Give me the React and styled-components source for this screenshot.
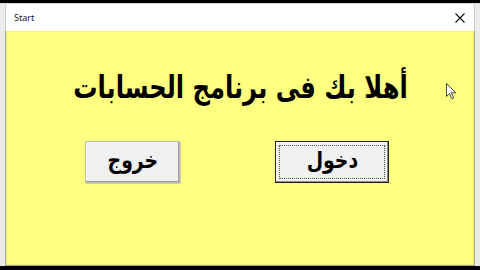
import React from 'react';
import styled, { createGlobalStyle } from 'styled-components';

const GlobalStyle = createGlobalStyle`
  html, body {
    margin: 0;
    padding: 0;
    background: #000;
    width: 480px;
    height: 270px;
    overflow: hidden;
  }
`;

const Screen = styled.div`
  width: 480px;
  height: 270px;
  padding-top: 3px;
  box-sizing: border-box;
`;

const Window = styled.div`
  position: relative;
  height: 263px;
  background: #ececec;
  border-top: 1px solid #d8d8d8;
  box-sizing: border-box;
  display: flex;
  flex-direction: column;
  padding: 0 5px 0 5px;
`;

const TitleBar = styled.div`
  height: 27px;
  background: #fff;
  display: flex;
  align-items: center;
  justify-content: space-between;
  padding: 0 9px 0 8px;
  border-left: 1px solid #c8c8c8;
  border-right: 1px solid #c8c8c8;
`;

const Title = styled.span`
  font-family: "Noto Sans", "DejaVu Sans", sans-serif;
  font-size: 9px;
  color: #111;
`;

const Close = styled.span`
  display: flex;
  width: 10px;
  height: 10px;
`;

const Client = styled.div`
  flex: 1;
  background: #ffff80;
  border: 1px solid #a8a88a;
  border-top: none;
  box-shadow: inset 0 0 2px rgba(150, 150, 90, 0.4);
  display: flex;
  flex-direction: column;
  align-items: center;
`;

const Heading = styled.h1`
  margin: 35px 0 0 0;
  font-family: "DejaVu Sans", sans-serif;
  font-weight: bold;
  font-size: 31px;
  line-height: 42px;
  color: #000;
  direction: rtl;
  white-space: nowrap;
  transform: scaleX(0.78);
`;

const ButtonRow = styled.div`
  align-self: stretch;
  display: flex;
  align-items: flex-start;
  padding-left: 79px;
  gap: 95px;
  margin-top: 33px;
`;

const Button = styled.button`
  width: ${p => p.$w}px;
  height: 42px;
  box-sizing: border-box;
  background: #f0f0f0;
  border: 1px solid ${p => (p.$focused ? '#222' : '#b9b9b9')};
  box-shadow: ${p =>
    p.$focused
      ? 'inset -1px -1px 0 #8a8a8a, inset 1px 1px 0 #fff'
      : '1px 1px 0 #d0d0b0, inset -1px -1px 0 #a0a0a0, inset 1px 1px 0 #fff'};
  display: flex;
  align-items: center;
  justify-content: center;
  padding: 0 0 4px 0;
  position: relative;

  &::after {
    content: '';
    display: ${p => (p.$focused ? 'block' : 'none')};
    position: absolute;
    inset: 3px;
    border: 1px dotted #555;
  }
`;

const Label = styled.span`
  font-family: "DejaVu Sans", sans-serif;
  font-weight: bold;
  font-size: 23px;
  color: #000;
  direction: rtl;
  transform: scaleX(0.82);
`;

const Cursor = styled.svg`
  position: absolute;
  left: 446px;
  top: 79px;
`;

export default function App() {
  return (
    <>
      <GlobalStyle />
      <Screen>
        <Window>
          <TitleBar>
            <Title>Start</Title>
            <Close>
              <svg width="10" height="10" viewBox="0 0 10 10">
                <path d="M0.5 0.5 L9.5 9.5 M9.5 0.5 L0.5 9.5" stroke="#111" strokeWidth="1.1" />
              </svg>
            </Close>
          </TitleBar>
          <Client>
            <Heading>أهلا بك فى برنامج الحسابات</Heading>
            <ButtonRow>
              <Button $w={95}><Label>خروج</Label></Button>
              <Button $w={114} $focused><Label>دخول</Label></Button>
            </ButtonRow>
          </Client>
          <Cursor width="11" height="17" viewBox="0 0 11 17">
            <path
              d="M0.5 0.5 L0.5 13.5 L3.5 10.5 L5.8 15.8 L7.6 15 L5.4 9.8 L9.8 9.8 Z"
              fill="#fff"
              stroke="#333"
              strokeWidth="0.9"
              strokeLinejoin="round"
            />
          </Cursor>
        </Window>
      </Screen>
    </>
  );
}
